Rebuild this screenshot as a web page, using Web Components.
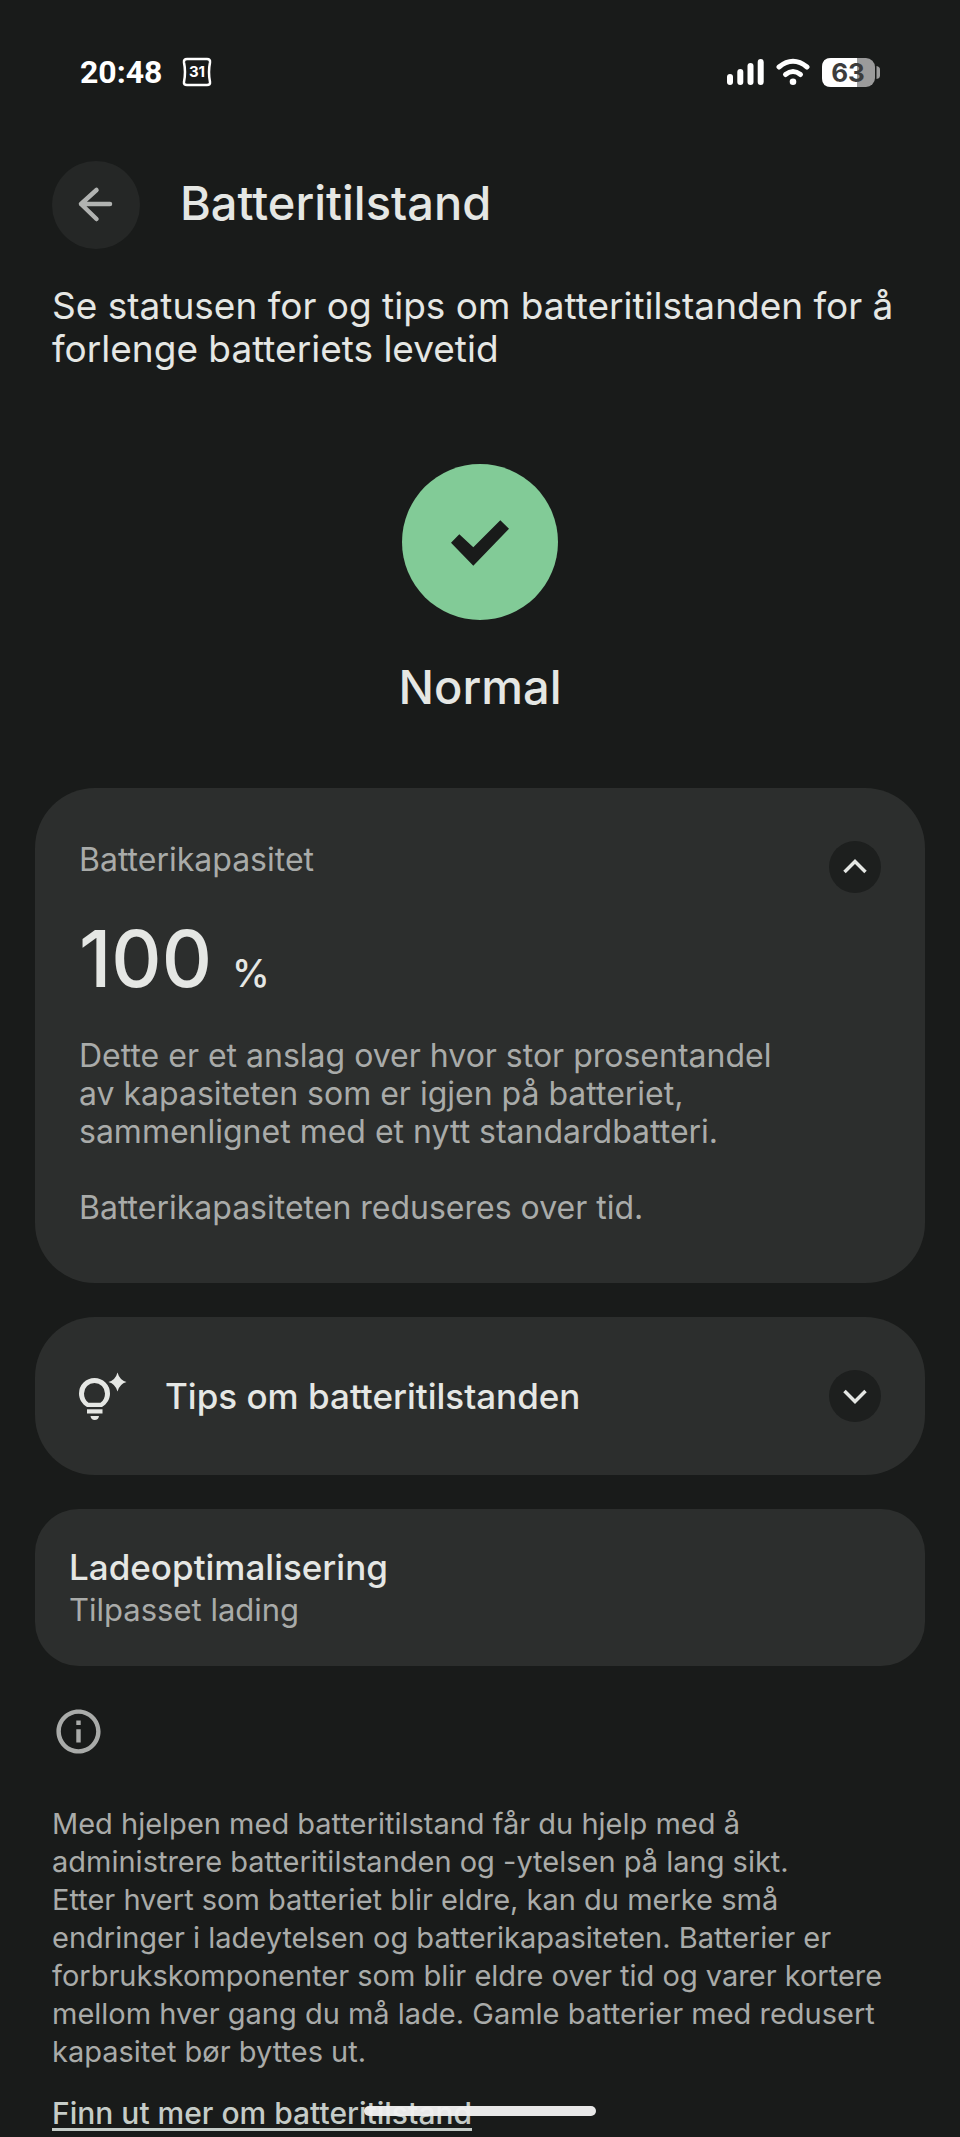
<!DOCTYPE html>
<html lang="nb">
<head>
    <meta charset="utf-8">
    <meta name="viewport" content="width=device-width, initial-scale=1">
    <title>Batteritilstand</title>
    <style>
        body {
            --bg: #191b1a;
            --card: #2c2e2d;
            --control: #1d1f1e;
            --text: #e5e7e4;
            --muted: #a9aba9;
            margin: 0;
            background: var(--bg);
            color: var(--text);
            font-family: Inter, "Liberation Sans", sans-serif;
        }
    </style>
</head>
<body>
    <battery-page></battery-page>

    <script>
        /**
         * Phone status bar: clock and calendar to the left, signal, wifi and battery to the right
         */
        class StatusBar extends HTMLElement {
            constructor() {
                super();
                this.attachShadow({ mode: 'open' });
                this.render();
            }

            render() {
                this.shadowRoot.innerHTML = `
                    <style>
                        :host {
                            display: flex;
                            justify-content: space-between;
                            align-items: center;
                            height: 36px;
                            padding: 54px 80px 0;
                            color: #fff;
                        }

                        .group {
                            display: flex;
                            align-items: center;
                        }

                        .left {
                            gap: 20px;
                        }

                        .right {
                            gap: 12px;
                        }

                        time {
                            font: 700 32px/36px Roboto, sans-serif;
                        }

                        svg {
                            display: block;
                        }

                        text {
                            font-family: Inter, sans-serif;
                            font-weight: 700;
                            text-anchor: middle;
                        }
                    </style>
                    <div class="group left">
                        <time>20:48</time>
                        <svg width="30" height="30" viewBox="0 0 30 30" aria-hidden="true">
                            <path d="M5 2H25Q28.500 2 28 5.500Q26 15 28 25Q28.500 28 25 28H5Q1.500 28 2 25Q4 15 2 5.500Q1.500 2 5 2Z" fill="none" stroke="#fff" stroke-width="2.500"/>
                            <text x="15" y="20" font-size="15" fill="#fff">31</text>
                        </svg>
                    </div>
                    <div class="group right">
                        <svg width="37" height="28" viewBox="0 0 37 28" fill="#fff" aria-hidden="true">
                            <rect x="0" y="16" width="6" height="11" rx="3"/>
                            <rect x="10.300" y="11" width="6" height="16" rx="3"/>
                            <rect x="20.500" y="5" width="6" height="22" rx="3"/>
                            <rect x="30.700" y="1" width="6" height="26" rx="3"/>
                        </svg>
                        <svg width="34" height="28" viewBox="0 0 34 28" fill="none" stroke="#fff" stroke-linecap="round" aria-hidden="true">
                            <path d="M3 9Q17-2.500 31 9" stroke-width="5"/>
                            <path d="M9.500 16.500Q17 10.500 24.500 16.500" stroke-width="5"/>
                            <circle cx="17" cy="23.800" r="3.300" fill="#fff" stroke="none"/>
                        </svg>
                        <svg width="58" height="30" viewBox="0 0 58 30" role="img" aria-label="Batteri 63 prosent">
                            <rect width="53" height="29" y="1" rx="9" fill="#9b9b9b"/>
                            <path d="M9 1H35V30H9Q0 30 0 21V10Q0 1 9 1Z" fill="#fff"/>
                            <path d="M54.500 9Q58 9.500 58 12.500V18.500Q58 21.500 54.500 22Z" fill="#9b9b9b"/>
                            <text x="26" y="25" font-size="26" fill="#3c3c3c">63</text>
                        </svg>
                    </div>
                `;
            }
        }

        /**
         * Top bar with back button and page title
         */
        class PageHeader extends HTMLElement {
            constructor() {
                super();
                this.attachShadow({ mode: 'open' });
                this.render();
            }

            render() {
                this.shadowRoot.innerHTML = `
                    <style>
                        :host {
                            display: flex;
                            align-items: center;
                            gap: 40px;
                        }

                        button {
                            width: 88px;
                            height: 88px;
                            padding: 0;
                            border: 0;
                            border-radius: 50%;
                            background: #252726;
                            color: #b1b3b1;
                            cursor: pointer;
                        }

                        svg {
                            display: block;
                        }

                        h1 {
                            margin: 0;
                            padding-bottom: 4px;
                            font-size: 47px;
                            font-weight: 500;
                            line-height: 56px;
                        }
                    </style>
                    <button type="button" aria-label="Tilbake">
                        <svg width="88" height="88" viewBox="0 0 88 88" fill="none" stroke="currentColor" stroke-width="4.500" stroke-linecap="round" stroke-linejoin="round">
                            <path d="M58 43H29M44.500 29L29 43L44.500 58"/>
                        </svg>
                    </button>
                    <h1><slot></slot></h1>
                `;
            }
        }

        /**
         * Large health state: green check with a label under it
         */
        class HealthStatus extends HTMLElement {
            constructor() {
                super();
                this.attachShadow({ mode: 'open' });
                this.render();
            }

            render() {
                this.shadowRoot.innerHTML = `
                    <style>
                        :host {
                            display: flex;
                            flex-direction: column;
                            align-items: center;
                            gap: 39px;
                            font-size: 47px;
                            font-weight: 500;
                            line-height: 56px;
                        }

                        svg {
                            display: block;
                        }
                    </style>
                    <svg width="156" height="156" viewBox="0 0 156 156" aria-hidden="true">
                        <circle cx="78" cy="78" r="78" fill="#82cb97"/>
                        <path d="M49 78.700L57.300 70.300L71.300 83.300L98.300 56.300L107 64.700L71.300 101.700Z" fill="#191b1a"/>
                    </svg>
                    <slot></slot>
                `;
            }
        }

        /**
         * Round chevron button, points up when its section is open
         */
        class ToggleButton extends HTMLElement {
            constructor() {
                super();
                this.attachShadow({ mode: 'open' });
            }

            connectedCallback() {
                this.render();
            }

            render() {
                const open = this.hasAttribute('open');
                const points = open ? '15.500,31 26,20.500 36.500,31' : '15.500,21 26,31.500 36.500,21';

                this.shadowRoot.innerHTML = `
                    <style>
                        :host {
                            display: block;
                            flex: none;
                        }

                        button {
                            display: block;
                            width: 52px;
                            height: 52px;
                            padding: 0;
                            border: 0;
                            border-radius: 50%;
                            background: var(--control);
                            color: var(--text);
                            cursor: pointer;
                        }

                        svg {
                            display: block;
                        }
                    </style>
                    <button type="button" aria-expanded="${open}" aria-label="${open ? 'Skjul' : 'Vis'}">
                        <svg width="52" height="52" viewBox="0 0 52 52" fill="none" stroke="currentColor" stroke-width="3.500">
                            <polyline points="${points}"/>
                        </svg>
                    </button>
                `;
            }
        }

        /**
         * Expanded card with the remaining capacity, the slot takes the explanation
         */
        class CapacityCard extends HTMLElement {
            constructor() {
                super();
                this.attachShadow({ mode: 'open' });
            }

            connectedCallback() {
                this.render();
            }

            render() {
                this.shadowRoot.innerHTML = `
                    <style>
                        :host {
                            display: flex;
                            align-items: flex-start;
                            padding: 53px 44px 56px;
                            border-radius: 60px;
                            background: var(--card);
                        }

                        .content {
                            flex: 1;
                            color: var(--muted);
                            font-size: 32px;
                            line-height: 38px;
                        }

                        h2 {
                            margin: 0;
                            font-size: 32px;
                            font-weight: 400;
                        }

                        .value {
                            display: flex;
                            align-items: baseline;
                            gap: 20px;
                            margin: 35px 0 33px;
                            color: var(--text);
                            font-weight: 500;
                        }

                        .number {
                            font-size: 78px;
                            line-height: 90px;
                        }

                        .unit {
                            font-size: 38px;
                        }

                        .details {
                            padding-right: 24px;
                        }

                        ::slotted(p) {
                            margin: 0 0 38px;
                        }

                        ::slotted(p:last-child) {
                            margin: 0;
                        }
                    </style>
                    <div class="content">
                        <h2>${this.getAttribute('label')}</h2>
                        <div class="value">
                            <span class="number">${this.getAttribute('value')}</span>
                            <span class="unit">%</span>
                        </div>
                        <div class="details"><slot></slot></div>
                    </div>
                    <toggle-button open></toggle-button>
                `;
            }
        }

        /**
         * Collapsed card with a bulb icon
         */
        class TipsCard extends HTMLElement {
            constructor() {
                super();
                this.attachShadow({ mode: 'open' });
                this.render();
            }

            render() {
                this.shadowRoot.innerHTML = `
                    <style>
                        :host {
                            display: flex;
                            align-items: center;
                            gap: 38px;
                            padding: 53px 44px;
                            border-radius: 60px;
                            background: var(--card);
                        }

                        h2 {
                            flex: 1;
                            margin: 0;
                            font-size: 35px;
                            font-weight: 500;
                            line-height: 44px;
                        }

                        svg {
                            display: block;
                            flex: none;
                        }
                    </style>
                    <svg width="48" height="48" viewBox="0 0 48 48" fill="#e5e7e4" aria-hidden="true">
                        <path fill-rule="evenodd" d="M8 35C3 32 0 27 0 21.500A15.500 15.500 0 0 1 31 21.500C31 27 28 32 23 35ZM9.500 30.800H21.500C24.500 28.500 26 25.500 26 21.500A10.500 10.500 0 0 0 5 21.500C5 25.500 6.500 28.500 9.500 30.800Z"/>
                        <rect x="8" y="37.300" width="15.500" height="4.200"/>
                        <path d="M11.500 44H20Q19.500 48 15.700 48Q12 48 11.500 44Z"/>
                        <path d="M38.500 0.500Q40.500 8 47.500 10Q40.500 12 38.500 19.500Q36.500 12 29.500 10Q36.500 8 38.500 0.500Z"/>
                    </svg>
                    <h2><slot></slot></h2>
                    <toggle-button></toggle-button>
                `;
            }
        }

        /**
         * Card with a setting name and its current choice
         */
        class SettingCard extends HTMLElement {
            constructor() {
                super();
                this.attachShadow({ mode: 'open' });
                this.render();
            }

            render() {
                this.shadowRoot.innerHTML = `
                    <style>
                        :host {
                            display: block;
                        }

                        button {
                            display: block;
                            width: 100%;
                            padding: 36px 34px 35px;
                            border: 0;
                            border-radius: 44px;
                            background: var(--card);
                            font: inherit;
                            text-align: left;
                            cursor: pointer;
                        }

                        .title {
                            display: block;
                            color: var(--text);
                            font-size: 35px;
                            font-weight: 500;
                            line-height: 44px;
                        }

                        .summary {
                            display: block;
                            color: var(--muted);
                            font-size: 31px;
                            line-height: 42px;
                        }
                    </style>
                    <button type="button">
                        <span class="title"><slot name="title"></slot></span>
                        <span class="summary"><slot></slot></span>
                    </button>
                `;
            }
        }

        /**
         * Footer note with info icon, text and a link
         */
        class InfoNote extends HTMLElement {
            constructor() {
                super();
                this.attachShadow({ mode: 'open' });
                this.render();
            }

            render() {
                this.shadowRoot.innerHTML = `
                    <style>
                        :host {
                            display: block;
                            color: var(--muted);
                            font-size: 29px;
                            line-height: 38px;
                        }

                        svg {
                            display: block;
                            margin-bottom: 47px;
                        }

                        ::slotted(p) {
                            margin: 0 0 23px;
                        }

                        ::slotted(a) {
                            color: #c5ccc8;
                            font-size: 30px;
                            font-weight: 500;
                            text-decoration: underline;
                            text-decoration-thickness: 3px;
                            text-decoration-skip-ink: none;
                            text-underline-offset: 4px;
                        }
                    </style>
                    <svg width="53" height="53" viewBox="0 0 24 24" fill="currentColor" aria-hidden="true">
                        <path d="M11 7h2v2h-2zm0 4h2v6h-2zm1-9C6.480 2 2 6.480 2 12s4.480 10 10 10 10-4.480 10-10S17.520 2 12 2zm0 18c-4.410 0-8-3.590-8-8s3.590-8 8-8 8 3.590 8 8-3.590 8-8 8z"/>
                    </svg>
                    <slot></slot>
                `;
            }
        }

        /**
         * The whole screen
         */
        class BatteryPage extends HTMLElement {
            constructor() {
                super();
                this.attachShadow({ mode: 'open' });
                this.render();
            }

            render() {
                this.shadowRoot.innerHTML = `
                    <style>
                        :host {
                            display: block;
                        }

                        .top {
                            padding: 71px 52px 0;
                        }

                        .intro {
                            margin: 35px 0 0;
                            font-size: 37px;
                            line-height: 43px;
                        }

                        health-status {
                            margin: 94px 0 73px;
                        }

                        .cards {
                            display: flex;
                            flex-direction: column;
                            gap: 34px;
                            padding: 0 35px;
                        }

                        info-note {
                            margin: 39px 52px 0;
                        }

                        /* gesture bar floats over the content */
                        .home {
                            position: fixed;
                            bottom: 21px;
                            left: 50%;
                            width: 232px;
                            height: 10px;
                            margin-left: -116px;
                            border-radius: 5px;
                            background: rgba(240, 240, 240, 0.96);
                        }
                    </style>
                    <status-bar></status-bar>
                    <main>
                        <div class="top">
                            <page-header>Batteritilstand</page-header>
                            <p class="intro">Se statusen for og tips om batteritilstanden for å forlenge batteriets levetid</p>
                        </div>
                        <health-status>Normal</health-status>
                        <div class="cards">
                            <capacity-card label="Batterikapasitet" value="100">
                                <p>Dette er et anslag over hvor stor prosentandel av kapasiteten som er igjen på batteriet, sammenlignet med et nytt standardbatteri.</p>
                                <p>Batterikapasiteten reduseres over tid.</p>
                            </capacity-card>
                            <tips-card>Tips om batteritilstanden</tips-card>
                            <setting-card>
                                <span slot="title">Ladeoptimalisering</span>
                                Tilpasset lading
                            </setting-card>
                        </div>
                        <info-note>
                            <p>Med hjelpen med batteritilstand får du hjelp med å administrere batteritilstanden og -ytelsen på lang sikt.<br>Etter hvert som batteriet blir eldre, kan du merke små endringer i ladeytelsen og batterikapasiteten. Batterier er forbrukskomponenter som blir eldre over tid og varer kortere mellom hver gang du må lade. Gamle batterier med redusert kapasitet bør byttes ut.</p>
                            <a href="#">Finn ut mer om batteritilstand</a>
                        </info-note>
                    </main>
                    <div class="home"></div>
                `;
            }
        }

        customElements.define('status-bar', StatusBar);
        customElements.define('page-header', PageHeader);
        customElements.define('health-status', HealthStatus);
        customElements.define('toggle-button', ToggleButton);
        customElements.define('capacity-card', CapacityCard);
        customElements.define('tips-card', TipsCard);
        customElements.define('setting-card', SettingCard);
        customElements.define('info-note', InfoNote);
        customElements.define('battery-page', BatteryPage);
    </script>
</body>
</html>
